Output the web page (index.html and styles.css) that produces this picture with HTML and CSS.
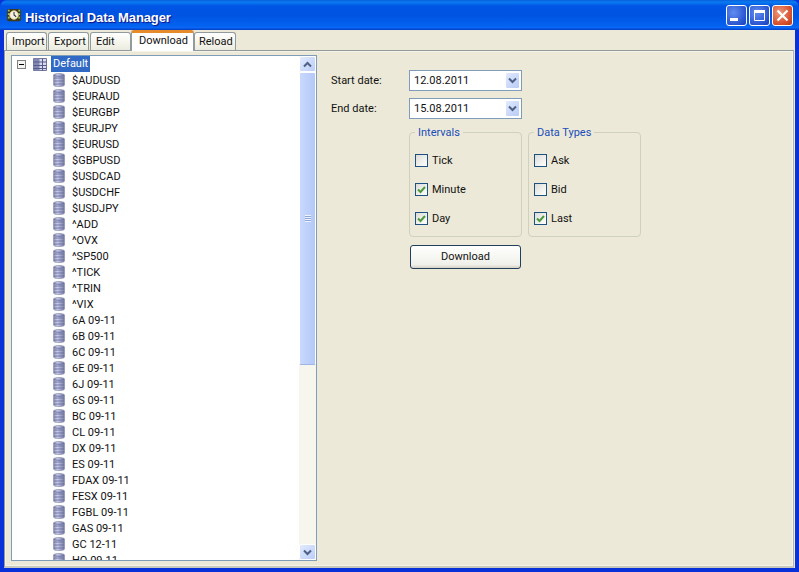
FILE: index.html
```html
<!DOCTYPE html>
<html lang="en">
<head>
  <meta charset="UTF-8">
  <title>Historical Data Manager</title>
  <link rel="stylesheet" href="styles.css">
</head>
<body>

  <svg class="defs" width="0" height="0">
    <defs>
      <linearGradient id="dbFill" x1="0" x2="1" y1="0" y2="0">
        <stop offset="0" stop-color="#8a90bc"/>
        <stop offset="0.35" stop-color="#c9cdea"/>
        <stop offset="1" stop-color="#777ca8"/>
      </linearGradient>
      <symbol id="db" viewBox="0 0 12 14">
        <path d="M.5 2C.5 1 3 .5 6 .5s5.500.5 5.500 1.500v10c0 1-2.500 1.500-5.500 1.500s-5.500-.5-5.500-1.500z" fill="url(#dbFill)" stroke="#8387a8" stroke-width=".6"/>
        <path d="M1 5h10M1 8h10M1 11h10" fill="none" stroke="#62678f" stroke-width=".8"/>
        <path d="M1 2.500c2 1 8 1 10 0" fill="none" stroke="#5d6290" stroke-width=".8"/>
      </symbol>
      <symbol id="chevron-down" viewBox="0 0 9 7">
        <path d="M1 1.500l3.500 3.500L8 1.500" fill="none" stroke="#4d6185" stroke-width="2"/>
      </symbol>
      <symbol id="chevron-up" viewBox="0 0 9 7">
        <path d="M1 5.500L4.500 2 8 5.500" fill="none" stroke="#4d6185" stroke-width="2"/>
      </symbol>
      <symbol id="check" viewBox="0 0 9 9">
        <path d="M1 4.500l2.500 2.500L8 2" fill="none" stroke="#4c9a3c" stroke-width="2"/>
      </symbol>
    </defs>
  </svg>

  <div class="window">
    <div class="titlebar">
      <svg class="app-icon" width="14" height="14" viewBox="0 0 16 16">
        <rect x="0" y="1" width="16" height="14" rx="2" fill="#3b3a20"/>
        <path d="M1 2h2v2H1zM1 6h2v2H1zM1 10h2v2H1zM13 2h2v2h-2zM13 6h2v2h-2zM13 10h2v2h-2z" fill="#a6c850"/>
        <circle cx="8" cy="8" r="5" fill="#f4f2e6" stroke="#c9b66a"/>
        <path d="M8 4.500V8l2.500 2" fill="none" stroke="#333" stroke-width="1.200"/>
      </svg>
      <div class="title">Historical Data Manager</div>
      <div class="win-buttons">
        <div class="win-btn">
          <svg width="19" height="19" viewBox="0 0 19 19"><rect x="3" y="12" width="8" height="3" fill="#fff"/></svg>
        </div>
        <div class="win-btn">
          <svg width="19" height="19" viewBox="0 0 19 19"><path d="M4.500 4.500h10v10h-10z" fill="none" stroke="#fff"/><rect x="4" y="4" width="11" height="3" fill="#fff"/></svg>
        </div>
        <div class="win-btn close">
          <svg width="19" height="19" viewBox="0 0 19 19"><path d="M4.500 4.500l10 10M14.500 4.500l-10 10" stroke="#fff" stroke-width="2.200"/></svg>
        </div>
      </div>
    </div>

    <div class="client">
      <div class="tabs">
        <div class="tab">Import</div>
        <div class="tab">Export</div>
        <div class="tab">Edit</div>
        <div class="tab selected">Download</div>
        <div class="tab last">Reload</div>
      </div>

      <div class="panel">
        <div class="tree-box">
          <div class="tree">
            <div class="root-row">
              <span class="expander"></span>
              <svg class="root-icon" width="16" height="16" viewBox="0 0 16 16">
                <path d="M1.500 2.500h13v12h-13z" fill="#d8dcf0" stroke="#70759a"/>
                <path d="M1.500 2.500h6v12h-6z" fill="#8288b4"/>
                <path d="M1.500 6h13M1.500 9.500h13M1.500 12.500h13M10.500 2.500v12" stroke="#555a88"/>
              </svg>
              <span class="root-label">Default</span>
            </div>
            <div class="row"><svg class="db"><use href="#db"/></svg>$AUDUSD</div>
            <div class="row"><svg class="db"><use href="#db"/></svg>$EURAUD</div>
            <div class="row"><svg class="db"><use href="#db"/></svg>$EURGBP</div>
            <div class="row"><svg class="db"><use href="#db"/></svg>$EURJPY</div>
            <div class="row"><svg class="db"><use href="#db"/></svg>$EURUSD</div>
            <div class="row"><svg class="db"><use href="#db"/></svg>$GBPUSD</div>
            <div class="row"><svg class="db"><use href="#db"/></svg>$USDCAD</div>
            <div class="row"><svg class="db"><use href="#db"/></svg>$USDCHF</div>
            <div class="row"><svg class="db"><use href="#db"/></svg>$USDJPY</div>
            <div class="row"><svg class="db"><use href="#db"/></svg>^ADD</div>
            <div class="row"><svg class="db"><use href="#db"/></svg>^OVX</div>
            <div class="row"><svg class="db"><use href="#db"/></svg>^SP500</div>
            <div class="row"><svg class="db"><use href="#db"/></svg>^TICK</div>
            <div class="row"><svg class="db"><use href="#db"/></svg>^TRIN</div>
            <div class="row"><svg class="db"><use href="#db"/></svg>^VIX</div>
            <div class="row"><svg class="db"><use href="#db"/></svg>6A 09-11</div>
            <div class="row"><svg class="db"><use href="#db"/></svg>6B 09-11</div>
            <div class="row"><svg class="db"><use href="#db"/></svg>6C 09-11</div>
            <div class="row"><svg class="db"><use href="#db"/></svg>6E 09-11</div>
            <div class="row"><svg class="db"><use href="#db"/></svg>6J 09-11</div>
            <div class="row"><svg class="db"><use href="#db"/></svg>6S 09-11</div>
            <div class="row"><svg class="db"><use href="#db"/></svg>BC 09-11</div>
            <div class="row"><svg class="db"><use href="#db"/></svg>CL 09-11</div>
            <div class="row"><svg class="db"><use href="#db"/></svg>DX 09-11</div>
            <div class="row"><svg class="db"><use href="#db"/></svg>ES 09-11</div>
            <div class="row"><svg class="db"><use href="#db"/></svg>FDAX 09-11</div>
            <div class="row"><svg class="db"><use href="#db"/></svg>FESX 09-11</div>
            <div class="row"><svg class="db"><use href="#db"/></svg>FGBL 09-11</div>
            <div class="row"><svg class="db"><use href="#db"/></svg>GAS 09-11</div>
            <div class="row"><svg class="db"><use href="#db"/></svg>GC 12-11</div>
            <div class="row"><svg class="db"><use href="#db"/></svg>HO 09-11</div>
          </div>
          <div class="scrollbar">
            <div class="scroll-btn"><svg width="9" height="7"><use href="#chevron-up"/></svg></div>
            <div class="scroll-thumb"><span class="grip"></span></div>
            <div class="scroll-track"></div>
            <div class="scroll-btn"><svg width="9" height="7"><use href="#chevron-down"/></svg></div>
          </div>
        </div>

        <div class="form">
          <div class="date-row">
            <label class="date-label">Start date:</label>
            <div class="combo">12.08.2011<span class="combo-btn"><svg width="9" height="7"><use href="#chevron-down"/></svg></span></div>
          </div>
          <div class="date-row">
            <label class="date-label">End date:</label>
            <div class="combo">15.08.2011<span class="combo-btn"><svg width="9" height="7"><use href="#chevron-down"/></svg></span></div>
          </div>

          <div class="options">
            <div class="groups">
              <fieldset class="group">
                <legend>Intervals</legend>
                <div class="check-row"><span class="checkbox"></span>Tick</div>
                <div class="check-row"><span class="checkbox"><svg width="9" height="9"><use href="#check"/></svg></span>Minute</div>
                <div class="check-row"><span class="checkbox"><svg width="9" height="9"><use href="#check"/></svg></span>Day</div>
              </fieldset>
              <fieldset class="group">
                <legend>Data Types</legend>
                <div class="check-row"><span class="checkbox"></span>Ask</div>
                <div class="check-row"><span class="checkbox"></span>Bid</div>
                <div class="check-row"><span class="checkbox"><svg width="9" height="9"><use href="#check"/></svg></span>Last</div>
              </fieldset>
            </div>
            <div class="download-btn">Download</div>
          </div>
        </div>
      </div>
    </div>
  </div>

</body>
</html>
```

FILE: styles.css
```css
html, body {
  margin: 0;
  height: 100%;
  overflow: hidden;
}

body {
  font-family: Roboto, "Liberation Sans", Arial, sans-serif;
  font-size: 11px;
  color: #111;
  background-color: #0831d9;
}

.defs {
  display: block;
  height: 0;
}

.window {
  display: flex;
  flex-direction: column;
  height: 572px;
  width: 799px;
}

.titlebar {
  display: flex;
  align-items: center;
  height: 30px;
  padding: 0 6px 0 7px;
  box-sizing: border-box;
  background: linear-gradient(#0a5fdc 0, #0a7bf0 7%, #0055e5 20%, #0053e1 50%, #0362f0 85%, #0a66f5 92%, #003dc4 100%);
  border-radius: 7px 7px 0 0;
}

.app-icon {
  flex: none;
  margin-right: 4px;
}

.title {
  flex: 1;
  font-family: "Liberation Sans", Arial, sans-serif;
  font-size: 13px;
  font-weight: bold;
  letter-spacing: -0.1px;
  color: #fff;
  text-shadow: 1px 1px 1px #0f1089;
  padding-top: 5px;
}

.win-buttons {
  display: flex;
  gap: 2px;
}

.win-btn {
  width: 19px;
  height: 19px;
  box-sizing: content-box;
  border: 1px solid #fff;
  border-radius: 3px;
  background: radial-gradient(circle at 35% 35%, #5f8df0, #2a55d0 70%, #1c3fb8);
}

.win-btn svg {
  display: block;
}

.win-btn.close {
  background: radial-gradient(circle at 35% 35%, #ec9a80, #d8512c 65%, #bb3a15);
}

.client {
  flex: 1;
  display: flex;
  flex-direction: column;
  min-height: 0;
  margin: 0 4px 4px;
  background-color: #ece9d8;
}

.tabs {
  display: flex;
  align-items: flex-end;
  height: 20px;
  padding-left: 2px;
  gap: 1px;
  position: relative;
  z-index: 1;
}

.tab {
  width: 41px;
  height: 18px;
  line-height: 18px;
  padding-left: 5px;
  box-sizing: border-box;
  border: 1px solid #919b9c;
  border-bottom: none;
  border-radius: 3px 3px 0 0;
  background: linear-gradient(#fff, #f5f4ea 60%, #ecebe0);
}

.tab.last {
  width: 42px;
  padding-left: 4px;
}

.tab.selected {
  width: 63px;
  height: 21px;
  line-height: 15px;
  padding-left: 7px;
  margin: 0 -1px -1px -1px;
  background: #fff;
  border-top: 3px solid #e68b2c;
}

.panel {
  flex: 1;
  display: flex;
  align-items: flex-start;
  min-height: 0;
  padding: 4px 0 0 6px;
  border: 1px solid #919b9c;
  border-right-color: #aeb4b4;
  border-bottom: 2px solid #c7c9bf;
  box-shadow: inset 0 0 0 1px #f5f3e8;
  margin-right: 1px;
}

.tree-box {
  display: flex;
  flex: none;
  width: 304px;
  height: 504px;
  border: 1px solid #7f9db9;
  background-color: #fff;
}

.tree {
  flex: 1;
  overflow: hidden;
  padding-left: 3px;
}

.root-row, .row {
  display: flex;
  align-items: center;
  height: 16px;
  white-space: nowrap;
}

.row {
  padding-left: 38px;
}

.db {
  flex: none;
  width: 12px;
  height: 14px;
  margin-right: 7px;
}

.expander {
  flex: none;
  position: relative;
  width: 7px;
  height: 7px;
  margin-left: 2px;
  margin-right: 6px;
  border: 1px solid #808080;
  background-color: #f4f4f0;
}

.expander::after {
  content: "";
  position: absolute;
  left: 1px;
  top: 3px;
  width: 5px;
  height: 1px;
  background-color: #000;
}

.root-icon {
  flex: none;
  margin-right: 3px;
}

.root-label {
  padding: 1px 2px 2px;
  color: #fff;
  background-color: #316ac5;
}

.scrollbar {
  display: flex;
  flex-direction: column;
  flex: none;
  width: 17px;
  background-color: #f6f5ee;
}

.scroll-btn {
  flex: none;
  display: flex;
  align-items: center;
  justify-content: center;
  height: 16px;
  box-sizing: border-box;
  border: 1px solid #fff;
  border-radius: 2px;
  background: linear-gradient(135deg, #e1eafe, #bccdf8);
}

.scroll-thumb {
  flex: none;
  display: flex;
  align-items: center;
  justify-content: center;
  height: 293px;
  box-sizing: border-box;
  border: 1px solid #fff;
  border-bottom-color: #9db4e6;
  border-radius: 2px;
  background: linear-gradient(90deg, #c9d8fc, #b4c8f8);
}

.grip {
  width: 6px;
  height: 7px;
  background: repeating-linear-gradient(#eef3ff 0 1px, #8da6dc 1px 2px);
}

.scroll-track {
  flex: 1;
}

.scroll-btn svg {
  display: block;
}

.form {
  flex: none;
  padding: 15px 0 0 14px;
}

.date-row {
  display: flex;
  align-items: center;
  height: 21px;
  margin-bottom: 7px;
}

.date-label {
  width: 78px;
}

.combo {
  display: flex;
  align-items: center;
  justify-content: space-between;
  width: 113px;
  height: 21px;
  box-sizing: border-box;
  padding: 0 1px 0 4px;
  border: 1px solid #7f9db9;
  background-color: #fff;
}

.combo-btn {
  display: flex;
  align-items: center;
  justify-content: center;
  width: 15px;
  height: 17px;
  border: 1px solid #fff;
  border-radius: 2px;
  box-sizing: border-box;
  background: linear-gradient(135deg, #e1eafe, #b9ccf6);
}

.options {
  margin: 6px 0 0 78px;
}

.groups {
  display: flex;
  gap: 6px;
}

.group {
  width: 113px;
  height: 111px;
  box-sizing: border-box;
  margin: 0;
  padding: 0 0 0 5px;
  border: 1px solid #d0d0bf;
  border-radius: 4px;
}

.group legend {
  margin-left: 0;
  padding: 0 3px;
  color: #1a4db8;
}

.check-row {
  display: flex;
  align-items: center;
  height: 29px;
}

.group legend + .check-row {
  margin-top: 7px;
}

.checkbox {
  display: flex;
  align-items: center;
  justify-content: center;
  flex: none;
  width: 11px;
  height: 11px;
  margin-right: 4px;
  border: 1px solid #1c5180;
  background: linear-gradient(135deg, #dcdcd7, #fff);
}

.download-btn {
  width: 111px;
  height: 24px;
  line-height: 22px;
  box-sizing: border-box;
  margin: 8px 0 0 1px;
  text-align: center;
  border: 1px solid #1f3f5a;
  border-radius: 3px;
  background: linear-gradient(#fff, #f0f0ea 85%, #d6d0c5);
}
```
